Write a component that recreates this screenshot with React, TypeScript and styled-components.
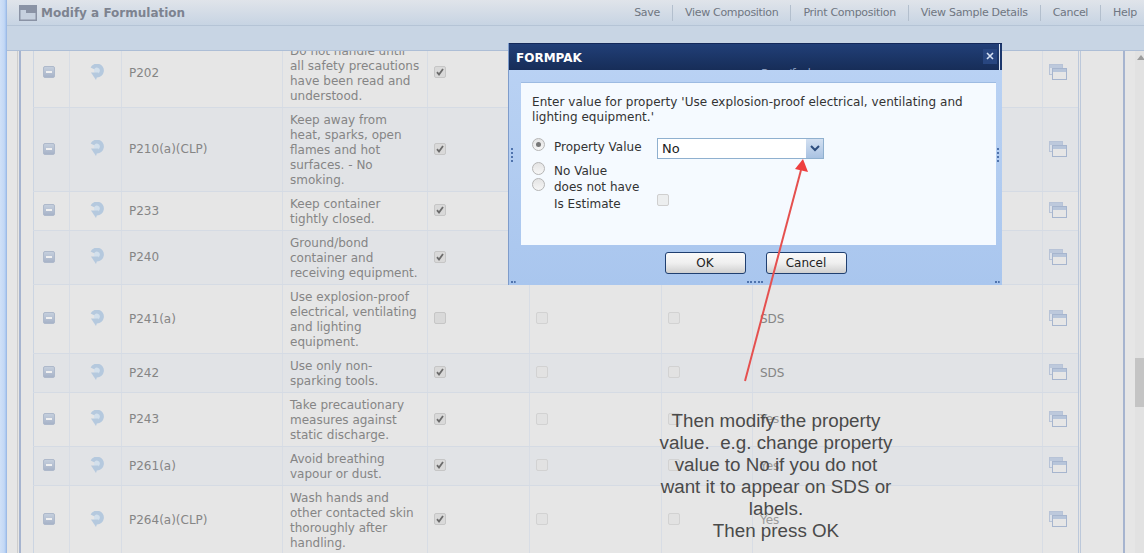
import styled, { createGlobalStyle } from "styled-components";

const GlobalStyle = createGlobalStyle`
  html, body {
    margin: 0;
    padding: 0;
    background: #fff;
  }
  body {
    font-family: "DejaVu Sans", Verdana, sans-serif;
    font-size: 12px;
    overflow: hidden;
  }
`;

const Page = styled.div`
  position: relative;
  display: flex;
  width: 1144px;
  height: 553px;
  overflow: hidden;
`;

const WindowEdge = styled.div`
  width: 6px;
  flex: none;
  background: linear-gradient(to right, #cfe0f7, #c3d8f5 70%, #a7c5ef);
  border-right: 1px solid #9dbbe6;
`;

const Main = styled.div`
  flex: 1;
  min-width: 0;
  display: flex;
  flex-direction: column;
`;

const TitleBar = styled.div`
  height: 25px;
  flex: none;
  display: flex;
  align-items: center;
  justify-content: space-between;
  padding: 0 7px 0 12px;
  background: linear-gradient(to bottom, #e0e4ea, #c7d4e3);
  border-bottom: 1px solid #b5c4d6;
`;

const PageTitle = styled.div`
  display: flex;
  align-items: center;
  gap: 4px;
  font-size: 12px;
  font-weight: bold;
  color: #7d8390;
`;

const Actions = styled.div`
  display: flex;
  align-items: center;
`;

const Action = styled.span`
  font-size: 11px;
  letter-spacing: -0.3px;
  color: #6f7681;
  padding: 0 12px;
  line-height: 16px;
  border-left: 1px solid #b3bfcd;
  &:first-child {
    border-left: 0;
  }
  &:last-child {
    padding-right: 0;
  }
`;

const SubBar = styled.div`
  height: 24px;
  flex: none;
  background: #c8d5e4;
  border-bottom: 1px solid #adbed6;
`;

const Content = styled.div`
  flex: 1;
  min-height: 0;
  display: flex;
  background: #e6e6e6;
`;

const Gutter = styled.div`
  width: 10px;
  flex: none;
  border-right: 1px solid #cdcdcd;
`;

const Frame = styled.div`
  flex: 1;
  min-width: 0;
  margin-left: 1px;
  padding-left: 12px;
  border-left: 2px solid #a6b4cf;
  overflow: hidden;
`;

const ScrollArea = styled.div`
  display: flex;
  height: 100%;
  overflow: hidden;
`;

const RightPane = styled.div`
  width: 10px;
  flex: none;
  margin-left: 42px;
  border-left: 2px solid #a6b4cf;
`;

const Table = styled.table`
  flex: none;
  width: 1048px;
  margin-top: -12px;
  align-self: flex-start;
  table-layout: fixed;
  border-collapse: collapse;
  border-left: 1px solid #ccd5e2;
  border-right: 3px double #bcc8da;
  color: #858585;
`;

const Row = styled.tr<{ $alt: boolean }>`
  background: ${(p) => (p.$alt ? "#e1e3e6" : "#e6e6e6")};
`;

const Cell = styled.td<{ $center?: boolean }>`
  padding: 4px 5px 4px 7px;
  line-height: 15px;
  vertical-align: middle;
  border-bottom: 1px solid #d5dbe4;
  border-right: 1px solid #d8dde5;
  text-align: ${(p) => (p.$center ? "center" : "left")};
`;

const BoxCell = styled(Cell)`
  padding-left: 6px;
`;

const StatementCell = styled(Cell)`
  padding-top: 5px;
  padding-bottom: 3px;
`;

const StatementText = styled.span`
  display: block;
  font-size: 12px;
  color: #858585;
`;

const FadedValue = styled.span<{ $faint?: boolean }>`
  color: ${(p) => (p.$faint ? "#9a9a9a" : "#858585")};
`;

const CheckBox = styled.span<{ $disabled?: boolean }>`
  display: block;
  box-sizing: border-box;
  width: 12px;
  height: 12px;
  margin: -1px 0 1px 0;
  border-radius: 2px;
  background: ${(p) => (p.$disabled ? "#e2e2e2" : "#d9d9d9")};
  border: 1px solid ${(p) => (p.$disabled ? "#d2d2d2" : "#c6c6c6")};
`;

const MinusButton = styled.span`
  display: flex;
  align-items: center;
  justify-content: center;
  width: 12px;
  height: 12px;
  margin: -1px auto 1px 2px;
  border-radius: 2px;
  background: linear-gradient(to bottom, #c5cfdd, #a7b3c8);
  border: 1px solid #aeb9cb;
  box-sizing: border-box;
  &::before {
    content: "";
    width: 6px;
    height: 2px;
    background: #f0f0f0;
  }
`;

const Modal = styled.div`
  position: absolute;
  left: 508px;
  top: 43px;
  width: 494px;
  height: 242px;
  display: flex;
  flex-direction: column;
  background: linear-gradient(to bottom, #bbd3f4, #a9c6ee);
  border-left: 1px solid #7e9ccb;
  box-sizing: border-box;
`;

const ModalTitle = styled.div`
  position: relative;
  height: 27px;
  flex: none;
  display: flex;
  align-items: center;
  justify-content: space-between;
  padding: 1px 5px 0 7px;
  background: linear-gradient(to bottom, #223f78, #1b3566 55%, #172d58);
  border-top: 1px solid #14295a;
  box-sizing: border-box;
  color: #fff;
  font-size: 12px;
  font-weight: bold;
  box-shadow: inset -2px 0 0 #1d386d, inset -3px 0 0 #dfe8f5;
`;

const ClosePad = styled.span`
  display: flex;
  align-items: center;
  justify-content: center;
  width: 14px;
  height: 15px;
  margin: -3px 0 0 0;
  background: #284680;
`;

const PeekingText = styled.span`
  position: absolute;
  left: 252px;
  bottom: 0;
  height: 3px;
  overflow: hidden;
  font-size: 12px;
  font-weight: normal;
  line-height: 15px;
  color: #8a9cbd;
`;

const Panel = styled.div`
  height: 163px;
  flex: none;
  margin: 12px 6px 0 12px;
  padding: 12px 11px 0 11px;
  background: #f5faff;
  box-sizing: border-box;
  color: #333;
  border-top: 1px solid #9dbbe2;
`;

const Prompt = styled.p`
  margin: 0 0 10px 0;
  line-height: 15px;
  font-size: 12px;
  letter-spacing: 0.05px;
`;

const FormGrid = styled.div`
  display: grid;
  grid-template-columns: 22px 103px 167px;
  grid-template-rows: 27px 16px 17px 18px;
  align-items: start;
`;

const Radio = styled.span<{ $checked?: boolean }>`
  display: flex;
  align-items: center;
  justify-content: center;
  box-sizing: border-box;
  width: 13px;
  height: 13px;
  margin-top: ${(p) => (p.$checked ? "3px" : "0")};
  border-radius: 50%;
  border: 1px solid #b5b5b5;
  background: linear-gradient(to bottom, #e4e4e4, #f6f6f6);
  &::after {
    content: "";
    display: ${(p) => (p.$checked ? "block" : "none")};
    width: 5px;
    height: 5px;
    border-radius: 50%;
    background: #777;
  }
`;

const FormLabel = styled.span<{ $first?: boolean }>`
  line-height: 15px;
  margin-top: ${(p) => (p.$first ? "5px" : "2px")};
  grid-column: 2;
`;

const Select = styled.div`
  display: flex;
  align-items: center;
  justify-content: space-between;
  box-sizing: border-box;
  height: 21px;
  background: #fff;
  border: 1px solid #8fb0cf;
  padding-left: 4px;
  font-size: 13px;
  color: #222;
  margin-top: 3px;
`;

const SelectButton = styled.span`
  display: flex;
  align-items: center;
  justify-content: center;
  width: 17px;
  height: 19px;
  background: linear-gradient(to bottom, #d3e0f1, #a9c2e2);
`;

const EstimateBox = styled(CheckBox)`
  grid-column: 3;
  margin-top: -1px;
  background: #eceeef;
  border-color: #cfcfcf;
`;

const ButtonRow = styled.div`
  display: flex;
  justify-content: center;
  gap: 20px;
  margin: 7px 0 0 0;
`;

const DialogButton = styled.button`
  width: 81px;
  height: 22px;
  padding: 0;
  border: 1px solid #1f3f70;
  border-radius: 3px;
  background: linear-gradient(to bottom, #fafafa, #efefef 50%, #cfcfcf);
  font-family: "DejaVu Sans", Verdana, sans-serif;
  font-size: 12px;
  color: #222;
`;

const Handle = styled.span<{ $side: "left" | "right" | "bottom" }>`
  position: absolute;
  ${(p) =>
    p.$side === "left"
      ? "left: 2px; top: 105px; height: 14px; border-left: 2px dotted #4f73ad;"
      : p.$side === "right"
        ? "right: 3px; top: 105px; height: 14px; border-left: 2px dotted #4f73ad;"
        : "left: 238px; bottom: 2px; width: 16px; border-top: 2px dotted #4f73ad;"}
`;

const Corner = styled.span<{ $right?: boolean }>`
  position: absolute;
  bottom: 2px;
  ${(p) => (p.$right ? "right: 2px;" : "left: 2px;")}
  width: 5px;
  height: 4px;
  border-bottom: 2px dotted #4f73ad;
`;

const Annotation = styled.div`
  position: absolute;
  left: 651px;
  top: 410px;
  width: 250px;
  font-family: "Liberation Sans", Arial, sans-serif;
  font-size: 18.8px;
  line-height: 22px;
  text-align: center;
  color: #4a4a4a;
`;

const ArrowLayer = styled.svg`
  position: absolute;
  left: 735px;
  top: 150px;
  pointer-events: none;
`;

const ScrollTrack = styled.div`
  width: 10px;
  flex: none;
  position: relative;
  background: #e2e2e2;
`;

const ScrollUp = styled.span`
  position: absolute;
  left: 2px;
  top: 4px;
  border-left: 4px solid transparent;
  border-right: 4px solid transparent;
  border-bottom: 5px solid #9c9c9c;
`;

const ScrollThumb = styled.span`
  position: absolute;
  left: 0;
  top: 307px;
  width: 10px;
  height: 49px;
  background: #c4c4c4;
`;

function WindowIcon() {
  return (
    <svg width="18" height="16" viewBox="0 0 18 16">
      <rect x="0.75" y="0.75" width="16.5" height="14.5" fill="#c5d0de" stroke="#8a93a5" strokeWidth="1.5" />
      <rect x="1" y="1" width="16" height="4" fill="#8a93a5" />
      <rect x="7" y="5" width="10" height="3" fill="#8a93a5" />
    </svg>
  );
}

function RefreshIcon() {
  return (
    <svg width="16" height="17" viewBox="0 0 16 17" style={{ display: "block", margin: "-1px auto 1px" }}>
      <circle cx="8.5" cy="6.5" r="3.5" fill="#d3e0ec" />
      <path d="M3.4 4.4A5 5 0 1 1 8 11.6" fill="none" stroke="#b5c9de" strokeWidth="4" />
      <path d="M2 8.5h7.5L7 16z" fill="#b5c9de" />
    </svg>
  );
}

function StackedWindowsIcon() {
  return (
    <svg width="18" height="16" viewBox="0 0 18 16" style={{ display: "block", margin: "-1px 0 1px -1px" }}>
      <rect x="0.5" y="0.5" width="13" height="10" fill="#dde2ea" stroke="#b7c3d7" />
      <rect x="1" y="1" width="12" height="3" fill="#bdc9dc" />
      <rect x="3.5" y="4.5" width="14" height="11" fill="#e6e6e6" stroke="#a6b5ce" />
      <rect x="4" y="5" width="13" height="3" fill="#b7c5da" />
    </svg>
  );
}

function Tick() {
  return (
    <svg width="10" height="10" viewBox="0 0 10 10" style={{ display: "block" }}>
      <path d="M2 5.2l2 2.3L8 2" fill="none" stroke="#6b6b6b" strokeWidth="1.8" />
    </svg>
  );
}

type Statement = {
  code: string;
  lines: string[];
  checked: boolean;
  value: string;
  faint?: boolean;
};

const statements: Statement[] = [
  { code: "P202", lines: ["Do not handle until", "all safety precautions", "have been read and", "understood."], checked: true, value: "" },
  { code: "P210(a)(CLP)", lines: ["Keep away from", "heat, sparks, open", "flames and hot", "surfaces. - No", "smoking."], checked: true, value: "" },
  { code: "P233", lines: ["Keep container", "tightly closed."], checked: true, value: "" },
  { code: "P240", lines: ["Ground/bond", "container and", "receiving equipment."], checked: true, value: "" },
  { code: "P241(a)", lines: ["Use explosion-proof", "electrical, ventilating", "and lighting", "equipment."], checked: false, value: "SDS" },
  { code: "P242", lines: ["Use only non-", "sparking tools."], checked: true, value: "SDS" },
  { code: "P243", lines: ["Take precautionary", "measures against", "static discharge."], checked: true, value: "Yes", faint: true },
  { code: "P261(a)", lines: ["Avoid breathing", "vapour or dust."], checked: true, value: "Yes", faint: true },
  { code: "P264(a)(CLP)", lines: ["Wash hands and", "other contacted skin", "thoroughly after", "handling."], checked: true, value: "Yes", faint: true },
];

const columnWidths = [36, 52, 161, 145, 102, 132, 91, 290, 37];

const actions = ["Save", "View Composition", "Print Composition", "View Sample Details", "Cancel", "Help"];

export default function App() {
  return (
    <>
      <GlobalStyle />
      <Page>
        <WindowEdge />
        <Main>
          <TitleBar>
            <PageTitle>
              <WindowIcon />
              Modify a Formulation
            </PageTitle>
            <Actions>
              {actions.map((a) => (
                <Action key={a}>{a}</Action>
              ))}
            </Actions>
          </TitleBar>
          <SubBar />
          <Content>
            <Gutter />
            <Frame>
              <ScrollArea>
                <Table>
                  <colgroup>
                    {columnWidths.map((w, i) => (
                      <col key={i} width={w} />
                    ))}
                  </colgroup>
                  <tbody>
                    {statements.map((s, i) => (
                      <Row key={s.code} $alt={i % 2 === 1}>
                        <Cell>
                          <MinusButton />
                        </Cell>
                        <Cell $center>
                          <RefreshIcon />
                        </Cell>
                        <Cell>{s.code}</Cell>
                        <StatementCell>
                          <StatementText>
                            {s.lines.map((l) => (
                              <span key={l}>
                                {l}
                                <br />
                              </span>
                            ))}
                          </StatementText>
                        </StatementCell>
                        <BoxCell>
                          <CheckBox>{s.checked && <Tick />}</CheckBox>
                        </BoxCell>
                        <BoxCell>
                          <CheckBox $disabled />
                        </BoxCell>
                        <BoxCell>
                          <CheckBox $disabled />
                        </BoxCell>
                        <Cell>
                          <FadedValue $faint={s.faint}>{s.value}</FadedValue>
                        </Cell>
                        <Cell>
                          <StackedWindowsIcon />
                        </Cell>
                      </Row>
                    ))}
                  </tbody>
                </Table>
                <RightPane />
                <ScrollTrack>
                  <ScrollUp />
                  <ScrollThumb />
                </ScrollTrack>
              </ScrollArea>
            </Frame>
          </Content>
        </Main>

        <Modal>
          <ModalTitle>
            FORMPAK
            <PeekingText>Pass/fader</PeekingText>
            <ClosePad>
              <svg width="8" height="8" viewBox="0 0 8 8">
                <path d="M1 1l6 6M7 1L1 7" stroke="#d5e0f2" strokeWidth="1.6" />
              </svg>
            </ClosePad>
          </ModalTitle>
          <Panel>
            <Prompt>
              Enter value for property 'Use explosion-proof electrical, ventilating and
              <br />
              lighting equipment.'
            </Prompt>
            <FormGrid>
              <Radio $checked />
              <FormLabel $first>Property Value</FormLabel>
              <Select>
                No
                <SelectButton>
                  <svg width="10" height="7" viewBox="0 0 10 7">
                    <path d="M1 1l4 4 4-4" fill="none" stroke="#2d4d7d" strokeWidth="2" />
                  </svg>
                </SelectButton>
              </Select>
              <Radio />
              <FormLabel>No Value</FormLabel>
              <span />
              <Radio />
              <FormLabel>does not have</FormLabel>
              <span />
              <FormLabel>Is Estimate</FormLabel>
              <EstimateBox />
            </FormGrid>
          </Panel>
          <ButtonRow>
            <DialogButton>OK</DialogButton>
            <DialogButton>Cancel</DialogButton>
          </ButtonRow>
          <Handle $side="left" />
          <Handle $side="right" />
          <Handle $side="bottom" />
          <Corner />
          <Corner $right />
        </Modal>

        <ArrowLayer width="90" height="240" viewBox="0 0 90 240">
          <path d="M10 231L66 20" stroke="#e5504f" strokeWidth="2" fill="none" />
          <path d="M68 9L73 22L60 19Z" fill="#ee3f3f" />
        </ArrowLayer>

        <Annotation>
          Then modify the property
          <br />
          value.&nbsp; e.g. change property
          <br />
          value to No if you do not
          <br />
          want it to appear on SDS or
          <br />
          labels.
          <br />
          Then press OK
        </Annotation>
      </Page>
    </>
  );
}
